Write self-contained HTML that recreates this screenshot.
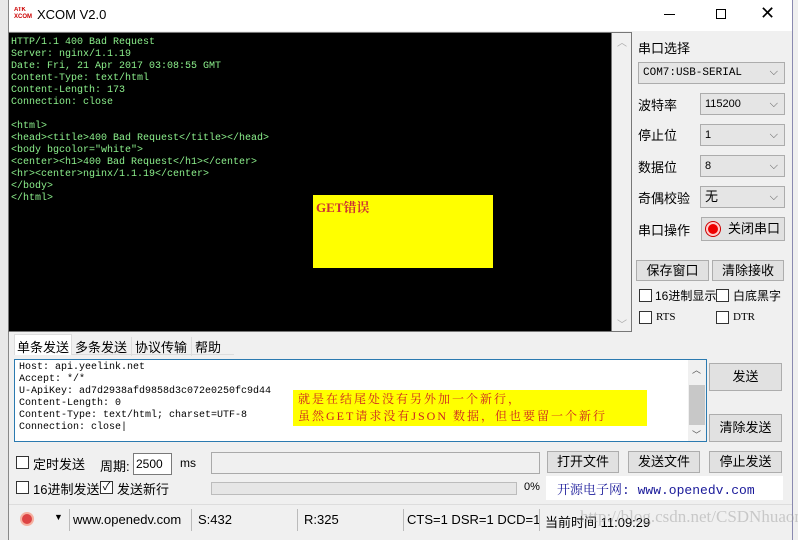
<!DOCTYPE html><html><head><meta charset="utf-8"><style>
*{box-sizing:border-box;margin:0;padding:0}
body{width:798px;height:540px;overflow:hidden;background:#f0f0f0;font-family:"Liberation Sans","Noto Sans CJK SC",sans-serif;font-size:12px;color:#000;position:relative}
.a{position:absolute}
.mono{font-family:"Liberation Mono","Noto Sans CJK SC",monospace;font-size:10px;line-height:12px;white-space:pre}
.btn{position:absolute;background:#e1e1e1;border:1px solid #adadad;text-align:center;font-size:13px}
.sel{position:absolute;background:#e5e5e5;border:1px solid #acacac;font-size:11px;padding-left:4px}
.sel:after{content:"⌵";position:absolute;right:6px;top:0;color:#555;font-size:11px}
.cb{position:absolute;width:13px;height:13px;border:1px solid #333;background:#fff}
.lbl{position:absolute;font-size:13px}
</style></head><body>
<div class="a" style="left:0;top:0;width:8px;height:540px;background:#e8e8e8"></div>
<div class="a" style="left:8px;top:0;width:785px;height:540px;background:#f0f0f0;border-left:1px solid #888;border-right:1px solid #8a8ab0"></div>
<!-- title -->
<div class="a" style="left:9px;top:0;width:783px;height:31px;background:#fff"></div>
<div class="a" style="left:14px;top:7px;width:18px;height:16px;font-size:6px;line-height:7px;color:#c00;font-weight:bold;overflow:hidden">ATK<br>XCOM</div>
<div class="a" style="left:37px;top:7px;font-size:13px">XCOM V2.0</div>
<div class="a" style="left:664px;top:14px;width:11px;height:1px;background:#000"></div>
<div class="a" style="left:716px;top:9px;width:10px;height:10px;border:1px solid #000"></div>
<div class="a" style="left:760px;top:3px;font-size:18px;font-weight:300">✕</div>
<!-- terminal -->
<div class="a" style="left:8px;top:32px;width:604px;height:300px;background:#000;border:1px solid #777"></div>
<div class="a mono" style="left:11px;top:37px;color:#8cf08c">HTTP/1.1 400 Bad Request
Server: nginx/1.1.19
Date: Fri, 21 Apr 2017 03:08:55 GMT
Content-Type: text/html
Content-Length: 173
Connection: close

&lt;html&gt;
&lt;head&gt;&lt;title&gt;400 Bad Request&lt;/title&gt;&lt;/head&gt;
&lt;body bgcolor="white"&gt;
&lt;center&gt;&lt;h1&gt;400 Bad Request&lt;/h1&gt;&lt;/center&gt;
&lt;hr&gt;&lt;center&gt;nginx/1.1.19&lt;/center&gt;
&lt;/body&gt;
&lt;/html&gt;</div>
<div class="a" style="left:313px;top:195px;width:180px;height:73px;background:#ff0"></div>
<div class="a" style="left:316px;top:197px;color:#c33;font-weight:bold;font-size:13px;font-family:'Liberation Serif','Noto Serif CJK SC',serif">GET错误</div>
<div class="a" style="left:612px;top:32px;width:20px;height:300px;background:#f0f0f0;border:1px solid #777;border-left:0"></div>
<div class="a" style="left:617px;top:34px;color:#aaa;font-size:10px">︿</div>
<div class="a" style="left:617px;top:316px;color:#aaa;font-size:10px">﹀</div>
<!-- right panel -->
<div class="lbl" style="left:638px;top:38px">串口选择</div>
<div class="sel" style="left:638px;top:62px;width:147px;height:22px;line-height:20px;font-family:'Liberation Mono','Noto Sans CJK SC',monospace">COM7:USB-SERIAL</div>
<div class="lbl" style="left:638px;top:95px">波特率</div>
<div class="sel" style="left:700px;top:93px;width:85px;height:22px;line-height:20px">115200</div>
<div class="lbl" style="left:638px;top:125px">停止位</div>
<div class="sel" style="left:700px;top:124px;width:85px;height:22px;line-height:20px">1</div>
<div class="lbl" style="left:638px;top:157px">数据位</div>
<div class="sel" style="left:700px;top:155px;width:85px;height:22px;line-height:20px">8</div>
<div class="lbl" style="left:638px;top:188px">奇偶校验</div>
<div class="sel" style="left:700px;top:186px;width:85px;height:22px;line-height:20px;font-size:13px">无</div>
<div class="lbl" style="left:638px;top:220px">串口操作</div>
<div class="btn" style="left:701px;top:217px;width:84px;height:24px;line-height:22px;padding-left:22px">关闭串口</div>
<div class="a" style="left:706px;top:222px;width:14px;height:14px;border-radius:50%;background:#e00;border:2px solid #fcc;box-shadow:0 0 0 1px #c00"></div>
<div class="btn" style="left:636px;top:260px;width:73px;height:21px;line-height:19px">保存窗口</div>
<div class="btn" style="left:712px;top:260px;width:72px;height:21px;line-height:19px">清除接收</div>
<div class="cb" style="left:639px;top:289px"></div><div class="lbl" style="left:655px;top:287px;font-size:12px">16进制显示</div>
<div class="cb" style="left:716px;top:289px"></div><div class="lbl" style="left:733px;top:287px;font-size:12px">白底黑字</div>
<div class="cb" style="left:639px;top:311px"></div><div class="lbl" style="left:656px;top:311px;font-size:11px;font-family:'Liberation Serif',serif">RTS</div>
<div class="cb" style="left:716px;top:311px"></div><div class="lbl" style="left:733px;top:311px;font-size:11px;font-family:'Liberation Serif',serif">DTR</div>
<!-- tabs -->
<div class="a" style="left:14px;top:335px;width:220px;height:20px;background:#f0f0f0;border-bottom:1px solid #ddd"></div>
<div class="a" style="left:14px;top:334px;width:58px;height:21px;background:#fff;border:1px solid #ddd;border-bottom:0;font-size:13px;padding:2px 0 0 2px">单条发送</div>
<div class="lbl" style="left:75px;top:337px;border-right:1px solid #ddd;padding-right:4px">多条发送</div>
<div class="lbl" style="left:135px;top:337px;border-right:1px solid #ddd;padding-right:4px">协议传输</div>
<div class="lbl" style="left:195px;top:337px">帮助</div>
<!-- send area -->
<div class="a" style="left:14px;top:359px;width:693px;height:83px;background:#fff;border:1px solid #2b7ab0"></div>
<div class="a mono" style="left:19px;top:362px">Host: api.yeelink.net
Accept: */*
U-ApiKey: ad7d2938afd9858d3c072e0250fc9d44
Content-Length: 0
Content-Type: text/html; charset=UTF-8
Connection: close|</div>
<div class="a" style="left:293px;top:390px;width:354px;height:36px;background:#ff0"></div>
<div class="a" style="left:298px;top:391px;color:#c22;font-size:12px;line-height:17px;letter-spacing:2px;font-family:'Liberation Serif','Noto Serif CJK SC',serif;white-space:pre">就是在结尾处没有另外加一个新行，
虽然GET请求没有JSON 数据，但也要留一个新行</div>
<div class="a" style="left:688px;top:360px;width:18px;height:81px;background:#f0f0f0"></div>
<div class="a" style="left:689px;top:385px;width:16px;height:40px;background:#c8c8c8"></div>
<div class="a" style="left:692px;top:363px;font-size:9px;color:#555">︿</div>
<div class="a" style="left:692px;top:428px;font-size:9px;color:#555">﹀</div>
<div class="btn" style="left:709px;top:363px;width:73px;height:28px;line-height:26px">发送</div>
<div class="btn" style="left:709px;top:414px;width:73px;height:28px;line-height:26px">清除发送</div>
<!-- row1 -->
<div class="cb" style="left:16px;top:456px"></div><div class="lbl" style="left:33px;top:454px">定时发送</div>
<div class="lbl" style="left:100px;top:456px">周期:</div>
<div class="a" style="left:133px;top:453px;width:39px;height:22px;background:#fff;border:1px solid #7a7a7a;padding:3px 2px;font-size:12px">2500</div>
<div class="lbl" style="left:180px;top:456px;font-size:12px">ms</div>
<div class="a" style="left:211px;top:452px;width:329px;height:22px;background:#f0f0f0;border:1px solid #aaa"></div>
<div class="btn" style="left:547px;top:451px;width:72px;height:22px;line-height:20px">打开文件</div>
<div class="btn" style="left:628px;top:451px;width:72px;height:22px;line-height:20px">发送文件</div>
<div class="btn" style="left:709px;top:451px;width:73px;height:22px;line-height:20px">停止发送</div>
<!-- row2 -->
<div class="cb" style="left:16px;top:481px"></div><div class="lbl" style="left:33px;top:479px">16进制发送</div>
<div class="cb" style="left:100px;top:481px;font-size:11px;line-height:11px;text-align:center">✓</div><div class="lbl" style="left:117px;top:479px">发送新行</div>
<div class="a" style="left:211px;top:482px;width:306px;height:13px;background:#e6e6e6;border:1px solid #bcbcbc"></div>
<div class="a" style="left:524px;top:481px;font-size:11px">0%</div>
<div class="a" style="left:546px;top:476px;width:237px;height:24px;background:#fff"></div>
<div class="a" style="left:557px;top:479px;color:#1a1a9a;font-size:13px;font-family:'Liberation Mono','Noto Serif CJK SC',monospace;white-space:pre">开源电子网: www.openedv.com</div>
<!-- status -->
<div class="a" style="left:9px;top:504px;width:783px;height:30px;background:#f0f0f0;border-top:1px solid #ddd"></div>
<div class="a" style="left:20px;top:512px;width:14px;height:14px;border-radius:50%;background:#d44;border:2px solid #f5b0a0"></div>
<div class="a" style="left:54px;top:512px;font-size:9px">▼</div>
<div class="a" style="left:69px;top:509px;width:1px;height:22px;background:#bbb"></div>
<div class="a" style="left:73px;top:512px;font-size:13px">www.openedv.com</div>
<div class="a" style="left:191px;top:509px;width:1px;height:22px;background:#bbb"></div>
<div class="a" style="left:198px;top:512px;font-size:13px">S:432</div>
<div class="a" style="left:297px;top:509px;width:1px;height:22px;background:#bbb"></div>
<div class="a" style="left:304px;top:512px;font-size:13px">R:325</div>
<div class="a" style="left:403px;top:509px;width:1px;height:22px;background:#bbb"></div>
<div class="a" style="left:407px;top:512px;font-size:13px">CTS=1 DSR=1 DCD=1</div>
<div class="a" style="left:539px;top:509px;width:1px;height:22px;background:#bbb"></div>
<div class="a" style="left:545px;top:512px;font-size:13px">当前时间 11:09:29</div>
<div class="a" style="left:580px;top:507px;font-size:17px;color:rgba(150,150,150,.45);font-family:'Liberation Serif',serif;white-space:pre">http://blog.csdn.net/CSDNhuaong</div>
</body></html>
